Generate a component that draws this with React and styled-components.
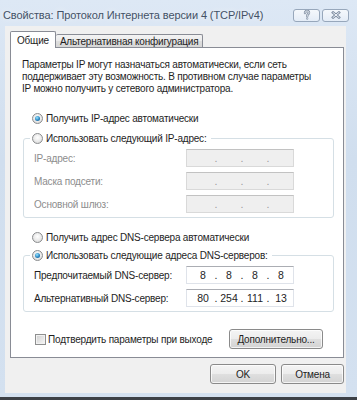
import styled, { createGlobalStyle } from "styled-components";

const GlobalStyle = createGlobalStyle`
	html, body {
		margin: 0;
		padding: 0;
		background: #3d4147;
	}
	body {
		font-family: "Liberation Sans", Arial, sans-serif;
	}
`;

const Window = styled.div`
	width: 357px;
	height: 397px;
	display: flex;
	flex-direction: column;
	background: linear-gradient(#dde8f5, #d0deee 40%, #d4e1f0);
	font-family: "Liberation Sans", Arial, sans-serif;
	font-size: 10px;
	letter-spacing: -0.2px;
	color: #1e1e1e;
`;

const TitleBar = styled.div`
	box-sizing: border-box;
	height: 26px;
	display: flex;
	align-items: center;
	justify-content: space-between;
	padding: 4px 8px 0 3px;
`;

const Title = styled.span`
	font-size: 11px;
	letter-spacing: -0.1px;
	color: #445266;
	text-shadow: 0 0 6px rgba(255, 255, 255, 0.9);
`;

const CaptionGroup = styled.div`
	display: flex;
	gap: 2px;
`;

const CaptionButton = styled.div`
	box-sizing: border-box;
	width: 27px;
	height: 13px;
	border: 1px solid #97a7bb;
	border-radius: 3px;
	background: linear-gradient(rgba(255, 255, 255, 0.7), rgba(255, 255, 255, 0.25));
	display: flex;
	align-items: center;
	justify-content: center;
`;

const Client = styled.div`
	box-sizing: border-box;
	height: 367px;
	margin: 0 11px 0 5px;
	padding: 5px 0 0 5px;
	background: #f0f0f0;
	display: flex;
	flex-direction: column;
`;

const TabRow = styled.div`
	display: flex;
	align-items: flex-end;
	height: 16px;
`;

const Tab = styled.div`
	box-sizing: border-box;
	display: flex;
	align-items: center;
	justify-content: center;
	height: ${ p => p.$active ? "17px" : "13px" };
	margin-bottom: ${ p => p.$active ? "-1px" : "0" };
	padding: 0 ${ p => p.$active ? "6px" : "4px" };
	border: 1px solid #898c95;
	border-bottom: none;
	border-left: ${ p => p.$active ? "1px solid #898c95" : "none" };
	border-radius: 2px 2px 0 0;
	background: ${ p => p.$active ? "#fff" : "linear-gradient(#f3f3f3, #ebebeb 50%, #dedede 51%, #d6d6d6)" };
	position: relative;
	z-index: ${ p => p.$active ? 1 : 0 };
`;

const Panel = styled.div`
	box-sizing: border-box;
	width: 334px;
	height: 311px;
	border: 1px solid #898c95;
	background: #fff;
	padding: 11px 10px 0 11px;
	display: flex;
	flex-direction: column;
`;

const Description = styled.p`
	margin: 0;
	line-height: 12px;
`;

const OptionRow = styled.label`
	display: flex;
	align-items: center;
	gap: 3px;
	height: 14px;
	margin-top: ${ p => p.$top || 0 }px;
	padding-left: 10px;
`;

const Radio = styled.span`
	box-sizing: border-box;
	flex: none;
	width: 11px;
	height: 11px;
	border-radius: 50%;
	border: 1px solid #8a8c8e;
	background: radial-gradient(circle at 50% 40%, #ffffff 0%, #e9e9e9 55%, #cdcdcd 100%);
	display: flex;
	align-items: center;
	justify-content: center;

	&::after {
		content: "";
		display: ${ p => p.$checked ? "block" : "none" };
		width: 5px;
		height: 5px;
		border-radius: 50%;
		background: radial-gradient(circle at 40% 35%, #9ae6ff 0%, #2a86c2 55%, #14507e 100%);
	}
`;

const Group = styled.fieldset`
	box-sizing: border-box;
	width: 311px;
	margin: ${ p => p.$top || 0 }px 0 0 1px;
	padding: 4px 39px 4px 6px;
	border: 1px solid #d5dfe5;
	border-radius: 3px;
	min-inline-size: 0;
`;

const Legend = styled.legend`
	padding: 0 4px 0 2px;
	height: 14px;
	display: flex;
	align-items: center;
	gap: 3px;
`;

const FieldList = styled.div`
	display: flex;
	flex-direction: column;
	gap: 5px;
`;

const FieldRow = styled.div`
	display: flex;
	align-items: center;
	height: 18px;
`;

const FieldLabel = styled.span`
	flex: 1;
	padding-left: 4px;
	color: ${ p => p.$disabled ? "#8d8d8d" : "inherit" };
`;

const IpBox = styled.div`
	box-sizing: border-box;
	width: 108px;
	height: 18px;
	padding-left: 6px;
	display: grid;
	grid-template-columns: 20px 6px 20px 6px 20px 6px 20px;
	align-items: center;
	text-align: center;
	border: 1px solid ${ p => p.$disabled ? "#d9d9d9" : "#dfe3ea" };
	border-top-color: ${ p => p.$disabled ? "#c2c2c2" : "#abadb3" };
	background: ${ p => p.$disabled ? "#efefef" : "#fff" };
	color: ${ p => p.$disabled ? "#9a9a9a" : "#1e1e1e" };
	font-size: 10.5px;
	letter-spacing: 0;
`;

const BottomRow = styled.div`
	display: flex;
	align-items: center;
	justify-content: space-between;
	margin-top: 17px;
	padding: 0 10px 0 13px;
`;

const CheckRow = styled.label`
	display: flex;
	align-items: center;
	gap: 2px;
`;

const Checkbox = styled.span`
	box-sizing: border-box;
	width: 11px;
	height: 11px;
	border: 1px solid #8e8f8f;
	background: linear-gradient(135deg, #cfcfcf, #f8f8f8);
	box-shadow: inset 0 0 0 1px #f2f2f2;
`;

const Button = styled.button`
	box-sizing: border-box;
	width: ${ p => p.$width }px;
	height: 20px;
	padding: 0;
	border: 1px solid #8a8a8a;
	border-radius: 3px;
	background: linear-gradient(#f4f4f4, #ececec 50%, #dfdfdf 51%, #d3d3d3);
	box-shadow: inset 0 0 0 1px rgba(255, 255, 255, 0.75);
	font-family: inherit;
	font-size: 10px;
	letter-spacing: inherit;
	color: #1e1e1e;
`;

const Footer = styled.div`
	width: 334px;
	margin-top: 6px;
	display: flex;
	justify-content: flex-end;
	gap: 5px;
`;

const IpField = ({ parts, disabled }) => (
	<IpBox $disabled={ disabled }>
		{ parts.flatMap((part, idx) => (
			idx === 0
				? [ <span key={ idx }>{ part }</span> ]
				: [ <span key={ `d${ idx }` }>.</span>, <span key={ idx }>{ part }</span> ]
		)) }
	</IpBox>
);

const HelpGlyph = () => (
	<svg width="8" height="10" viewBox="0 0 8 10">
		<g fill="none" strokeLinecap="round">
			<path d="M2 3.1C2 1.8 2.9 1 4 1s2 .8 2 1.8c0 1.3-1.8 1.5-1.8 3V6.3" stroke="#7d8ca0" strokeWidth="2.4" />
			<path d="M2 3.1C2 1.8 2.9 1 4 1s2 .8 2 1.8c0 1.3-1.8 1.5-1.8 3V6.3" stroke="#f4f7fb" strokeWidth="1" />
		</g>
		<circle cx="4.2" cy="8.6" r="1.1" fill="#7d8ca0" />
		<circle cx="4.2" cy="8.6" r="0.5" fill="#f4f7fb" />
	</svg>
);

const CloseGlyph = () => (
	<svg width="10" height="8" viewBox="0 0 10 8">
		<g fill="none" strokeLinecap="square">
			<path d="M2 1.5l6 5M8 1.5l-6 5" stroke="#7d8ca0" strokeWidth="2.6" />
			<path d="M2 1.5l6 5M8 1.5l-6 5" stroke="#f4f7fb" strokeWidth="1" />
		</g>
	</svg>
);

const staticRows = [ "IP-адрес:", "Маска подсети:", "Основной шлюз:" ];

const dnsRows = [
	{ label: "Предпочитаемый DNS-сервер:", parts: [ "8", "8", "8", "8" ] },
	{ label: "Альтернативный DNS-сервер:", parts: [ "80", "254", "111", "13" ] }
];

const App = () => (
	<>
		<GlobalStyle />
		<Window>
			<TitleBar>
				<Title>Свойства: Протокол Интернета версии 4 (TCP/IPv4)</Title>
				<CaptionGroup>
					<CaptionButton><HelpGlyph /></CaptionButton>
					<CaptionButton><CloseGlyph /></CaptionButton>
				</CaptionGroup>
			</TitleBar>

			<Client>
				<TabRow>
					<Tab $active>Общие</Tab>
					<Tab>Альтернативная конфигурация</Tab>
				</TabRow>

				<Panel>
					<Description>
						Параметры IP могут назначаться автоматически, если сеть<br />
						поддерживает эту возможность. В противном случае параметры<br />
						IP можно получить у сетевого администратора.
					</Description>

					<OptionRow $top={ 16 }>
						<Radio $checked />
						Получить IP-адрес автоматически
					</OptionRow>

					<Group $top={ 6 }>
						<Legend>
							<Radio />
							Использовать следующий IP-адрес:
						</Legend>
						<FieldList>
							{ staticRows.map(label => (
								<FieldRow key={ label }>
									<FieldLabel $disabled>{ label }</FieldLabel>
									<IpField parts={ [ "", "", "", "" ] } disabled />
								</FieldRow>
							)) }
						</FieldList>
					</Group>

					<OptionRow $top={ 12 }>
						<Radio />
						Получить адрес DNS-сервера автоматически
					</OptionRow>

					<Group $top={ 4 }>
						<Legend>
							<Radio $checked />
							Использовать следующие адреса DNS-серверов:
						</Legend>
						<FieldList>
							{ dnsRows.map(row => (
								<FieldRow key={ row.label }>
									<FieldLabel>{ row.label }</FieldLabel>
									<IpField parts={ row.parts } />
								</FieldRow>
							)) }
						</FieldList>
					</Group>

					<BottomRow>
						<CheckRow>
							<Checkbox />
							Подтвердить параметры при выходе
						</CheckRow>
						<Button $width={ 94 }>Дополнительно...</Button>
					</BottomRow>
				</Panel>

				<Footer>
					<Button $width={ 66 }>OK</Button>
					<Button $width={ 63 }>Отмена</Button>
				</Footer>
			</Client>
		</Window>
	</>
);

export default App;
